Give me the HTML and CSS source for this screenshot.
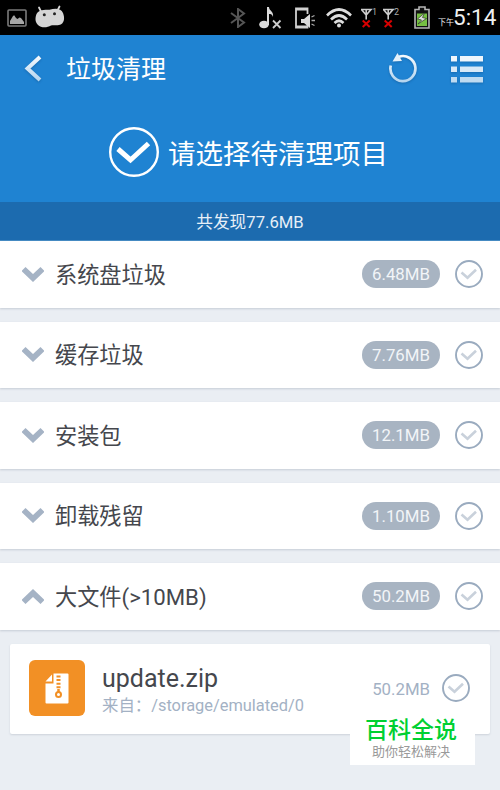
FILE: index.html
```html
<!doctype html>
<html lang="zh-CN">
	<head>
		<meta charset="utf-8">
		<title>垃圾清理</title>
		<link rel="stylesheet" href="styles.css">
	</head>
	<body>
		<svg class="defs" width="0" height="0">
			<defs>
				<linearGradient id="fade" x1="0" y1="0" x2="0" y2="1">
					<stop offset="0" stop-color="#f4f9fd"/>
					<stop offset="1" stop-color="#b5d5ef"/>
				</linearGradient>
			</defs>
			<symbol id="check" viewBox="0 0 28 28">
				<circle cx="14" cy="14" r="13" fill="#fff" stroke="#9aabbf" stroke-width="1.9"/>
				<path d="M6.5 12.500l6 5.200 8.500-8" fill="none" stroke="#c9d1db" stroke-width="2.6"/>
			</symbol>
			<symbol id="down" viewBox="0 0 22 15">
				<path d="M0 3.500L3.500 0 11 7 18.500 0 22 3.500v1L11 15 0 4.500z" fill="#a5b3c5"/>
			</symbol>
			<symbol id="antenna" viewBox="0 0 12 20">
				<path d="M.5 1.500h9.500L5.200 7zM5.200 1.500V11.500" fill="none" stroke="#ccc" stroke-width="1.600"/>
				<path d="M1.700 12.500l7 6.500M8.700 12.500l-7 6.500" stroke="#d90000" stroke-width="2"/>
			</symbol>
		</svg>
		<div id="status">
			<svg class="s-pic" width="20" height="18" viewBox="0 0 20 18">
				<rect x="1" y="1" width="18" height="16" rx="1" fill="none" stroke="#7b7b7b" stroke-width="1.6"/>
				<path d="M3 15v-3l3-5 1.2-.7L9 9l1.5 1 2-1.5 1.5.6 3 3.9v2z" fill="#a6a6a6"/>
			</svg>
			<svg class="s-bot" width="30" height="23" viewBox="0 0 30 23">
				<path d="M4 2.500l2 4M24.500 1.500l-2 4" stroke="#d5d5d5" stroke-width="1.800" stroke-linecap="round"/>
				<path d="M1.500 9C4 4.500 9 5 14.500 4.800 20 3 26 3 28 8c2 5 1.500 11-4 12-3.500.7-5.500-.4-8 .5-4 2.500-10 2.500-13-.5-3-3-3-7-1.500-11z" fill="#d5d5d5"/>
				<circle cx="9.300" cy="9.800" r="1.500" fill="#222"/>
				<circle cx="19.500" cy="8.800" r="1.500" fill="#222"/>
			</svg>
			<svg class="s-bt" width="16" height="20" viewBox="0 0 16 20">
				<path d="M1 5l13 9.500-6 4.500V1l6 4.500L1 15" fill="none" stroke="#555" stroke-width="2"/>
			</svg>
			<svg class="s-note" width="23" height="22" viewBox="0 0 23 22">
				<ellipse cx="5" cy="17.500" rx="4.800" ry="3.800" fill="#dadada"/>
				<path d="M8 18V0h2c0 4 5 4 4 10-1-3-2-3-4-3v11z" fill="#dadada"/>
				<path d="M14 13.500l7.500 7.500M21.500 13.500L14 21" stroke="#ccc" stroke-width="1.800"/>
			</svg>
			<svg class="s-phone" width="20" height="22" viewBox="0 0 20 22">
				<path d="M12.500 7V1.500H1v19h11.500V18" fill="none" stroke="#d0d0d0" stroke-width="1.800"/>
				<path d="M1 2.500h11.500M1 19.500h11.500" stroke="#d0d0d0" stroke-width="2"/>
				<path d="M6 12h3l6-5v14l-6-5H6z" fill="#dadada"/>
				<path d="M16.500 10l3-1.500M16.500 13.500H20M16.500 17l3 1.500" stroke="#aaa" stroke-width="1.300"/>
			</svg>
			<svg class="s-wifi" width="26" height="20" viewBox="0 0 26 20">
				<path d="M1 7.500Q13-4.500 25 7.500M5 11.500q8-8 16 0M8.500 15q4.500-4.500 9 0" fill="none" stroke="#ddd" stroke-width="2.600"/>
				<circle cx="13" cy="17.500" r="2" fill="#ddd"/>
			</svg>
			<span class="sim"><svg width="12" height="20"><use href="#antenna"/></svg><i>1</i></span>
			<span class="sim"><svg width="12" height="20"><use href="#antenna"/></svg><i>2</i></span>
			<svg class="s-bat" width="16" height="23" viewBox="0 0 16 23">
				<path d="M1 3.500h4V1h6v2.500h4V22H1z" fill="#111" stroke="#b5b5b5" stroke-width="1.600"/>
				<path d="M3 7.500h10V20H3z" fill="#76c043"/>
				<path d="M10.500 7L3.500 13l4 1-3.500 4 8.500-5.500-4-1z" fill="#ddd" stroke="#2c3a22" stroke-width=".7"/>
			</svg>
			<span class="ampm">下午</span>
			<span class="clock">5:14</span>
		</div>
		<div id="header">
			<svg class="back" width="18" height="28" viewBox="0 0 18 28">
				<path d="M16 2L3.500 13.500 16 25" fill="none" stroke="url(#fade)" stroke-width="4"/>
			</svg>
			<h1>垃圾清理</h1>
			<svg class="refresh" width="30" height="30" viewBox="0 0 30 30">
				<path d="M2.800 12.500A12.500 12.500 0 1 0 11 3.700" fill="none" stroke="url(#fade)" stroke-width="2.700"/>
				<path d="M4.500 8.500L9.500 0l4.500 8z" fill="#e3f0fa"/>
			</svg>
			<svg class="menu" width="32" height="27" viewBox="0 0 32 27">
				<path fill="#eff6fc" d="M0 0h6v5.500H0zM9 0h23v5.500H9z"/>
				<path fill="#d8e9f7" d="M0 10.500h6V16H0zM9 10.500h23V16H9z"/>
				<path fill="#bfdbf1" d="M0 21h6v5.500H0zM9 21h23v5.500H9z"/>
			</svg>
		</div>
		<div id="hero">
			<svg width="50" height="50" viewBox="0 0 50 50" fill="none" stroke="#fff">
				<circle cx="25" cy="25" r="23.800" stroke-width="2.400"/>
				<path d="M9 22l12.500 11L39.500 16.500" stroke-width="5"/>
			</svg>
			<h2>请选择待清理项目</h2>
		</div>
		<div id="found">共发现77.6MB</div>
		<div id="list">
			<div class="row">
				<svg class="arrow"><use href="#down"/></svg>
				<span class="name">系统盘垃圾</span>
				<span class="size">6.48MB</span>
				<svg class="check"><use href="#check"/></svg>
			</div>
			<div class="row">
				<svg class="arrow"><use href="#down"/></svg>
				<span class="name">缓存垃圾</span>
				<span class="size">7.76MB</span>
				<svg class="check"><use href="#check"/></svg>
			</div>
			<div class="row">
				<svg class="arrow"><use href="#down"/></svg>
				<span class="name">安装包</span>
				<span class="size">12.1MB</span>
				<svg class="check"><use href="#check"/></svg>
			</div>
			<div class="row">
				<svg class="arrow"><use href="#down"/></svg>
				<span class="name">卸载残留</span>
				<span class="size">1.10MB</span>
				<svg class="check"><use href="#check"/></svg>
			</div>
			<div class="row">
				<svg class="arrow up"><use href="#down"/></svg>
				<span class="name">大文件(&gt;10MB)</span>
				<span class="size">50.2MB</span>
				<svg class="check"><use href="#check"/></svg>
			</div>
			<div class="file">
				<svg class="zip" width="56" height="56" viewBox="0 0 56 56">
					<rect width="56" height="56" rx="6" fill="#f29025"/>
					<path d="M24.500 13.500h14q1 0 1 1v28q0 1-1 1h-21q-1 0-1-1v-19h8z" fill="#fff"/>
					<path d="M16.500 21.500l6.500-7v7z" fill="#fff"/>
					<path d="M29.500 15.500V30" stroke="#f29025" stroke-width="4" stroke-dasharray="2 1.600"/>
					<path d="M29.500 29v4" stroke="#f29025" stroke-width="2.500"/>
					<circle cx="29.500" cy="34.500" r="2.500" fill="none" stroke="#f29025" stroke-width="2"/>
				</svg>
				<div class="info">
					<p class="title">update.zip</p>
					<p class="path">来自：/storage/emulated/0</p>
				</div>
				<span class="fsize">50.2MB</span>
				<svg class="check"><use href="#check"/></svg>
			</div>
		</div>
		<div id="brand">
			<b>百科全说</b>
			<span>助你轻松解决</span>
		</div>
	</body>
</html>
```
FILE: styles.css
```css
*{
	margin:0;
	padding:0;
	box-sizing:border-box;
}
body{
	width:500px;
	height:790px;
	overflow:hidden;
	background-color:#eaeef3;
	font-family:Roboto,"Noto Sans CJK SC",sans-serif;
	color:#45474d;
}
svg{
	display:block;
	flex:none;
}
.defs{
	position:absolute;
}
h1,h2{
	font-weight:normal;
}
#status{
	display:flex;
	height:35px;
	padding-left:7px;
	align-items:center;
	background-color:black;
	color:#f0f0f0;
	white-space:nowrap;
}
.s-bot{
	margin:0 0 2px 8px;
}
.s-bt{
	margin-left:165px;
}
.s-note{
	margin-left:13px;
}
.s-phone{
	margin-left:13px;
}
.s-wifi{
	margin-left:11px;
}
.sim{
	display:flex;
	width:22px;
	margin-left:9px;
	color:#aaa;
}
.sim + .sim{
	margin-left:0;
}
.sim i{
	margin-left:-1px;
	font-size:9px;
	line-height:8px;
	font-style:normal;
}
.s-bat{
	margin-left:9px;
}
.ampm{
	width:16px;
	margin:7px 0 0 8px;
	font-size:8px;
}
.clock{
	margin-left:-1px;
	font-size:22.5px;
	line-height:35px;
}
#header{
	display:flex;
	height:67px;
	padding:0 17px 0 24px;
	align-items:center;
	background-color:#1f83d2;
	color:white;
}
#header svg{
	filter:drop-shadow(0 1px 1px rgba(0,50,100,.3));
}
#header h1{
	flex:1;
	margin-left:24px;
	padding-top:3px;
	font-size:25px;
	line-height:30px;
}
.refresh{
	margin-bottom:2px;
}
.menu{
	margin:1px 0 0 33px;
}
#hero{
	display:flex;
	height:100px;
	padding-right:3px;
	align-items:center;
	justify-content:center;
	background-color:#1f83d2;
	color:white;
}
#hero h2{
	margin-left:9px;
	padding-top:5px;
	font-size:27.5px;
	line-height:34px;
}
#found{
	height:39px;
	padding-top:1px;
	background-color:#1c6baf;
	border-bottom:1px solid #468cc4;
	color:#e6eff7;
	font-size:16.7px;
	line-height:39px;
	text-align:center;
}
.row{
	display:flex;
	height:66.5px;
	margin-bottom:14px;
	padding:0 17px 0 22px;
	align-items:center;
	background-color:white;
	box-shadow:0 1px 2px rgba(90,105,125,.25);
}
.arrow{
	width:22px;
	height:15px;
}
.up{
	transform:rotate(180deg);
}
.name{
	flex:1;
	margin-left:11px;
	padding-top:1px;
	font-size:22.2px;
	line-height:30px;
}
.size{
	width:78px;
	height:28px;
	border-radius:14px;
	background-color:#a8b4c2;
	color:#f2f5f8;
	font-size:16.8px;
	line-height:29px;
	text-align:center;
}
.check{
	width:28px;
	height:28px;
	margin-left:15px;
}
.file{
	display:flex;
	height:90px;
	margin:0 10px;
	padding:0 20px 2px 19px;
	align-items:center;
	background-color:white;
	border-radius:2px;
	box-shadow:0 1px 2px rgba(90,105,125,.2);
}
.info{
	flex:1;
	margin-left:17px;
	padding-top:7px;
}
.title{
	font-size:25px;
	line-height:30px;
}
.path{
	font-size:16.4px;
	line-height:24px;
	color:#a3b1c4;
}
.fsize{
	padding-top:2px;
	font-size:16.8px;
	color:#a3b1c4;
}
.file .check{
	margin-left:12px;
}
#brand{
	position:absolute;
	left:350px;
	top:715px;
	display:flex;
	width:125px;
	height:50px;
	padding:1px 3px 0 0;
	flex-direction:column;
	align-items:center;
	background-color:white;
	white-space:nowrap;
}
#brand b{
	font-size:23px;
	line-height:29px;
	font-weight:500;
	color:#00d032;
}
#brand span{
	font-size:13px;
	line-height:14px;
	color:#999;
}
```
